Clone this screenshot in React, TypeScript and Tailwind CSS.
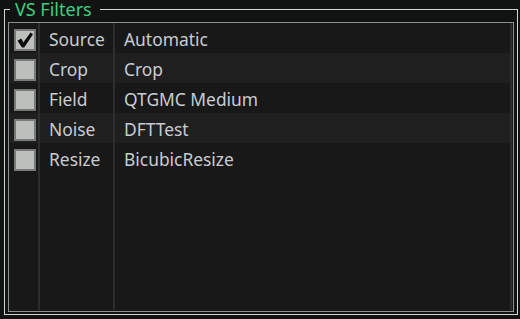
import React from 'react'

type Filter = {
  kind: string
  name: string
  enabled: boolean
}

const filters: Filter[] = [
  { kind: 'Source', name: 'Automatic', enabled: true },
  { kind: 'Crop', name: 'Crop', enabled: false },
  { kind: 'Field', name: 'QTGMC Medium', enabled: false },
  { kind: 'Noise', name: 'DFTTest', enabled: false },
  { kind: 'Resize', name: 'BicubicResize', enabled: false },
]

function CheckBox({ checked }: { checked: boolean }) {
  return (
    <div className="w-[22px] h-[22px] border-2 border-[#777b77] bg-[#bcbfbc] flex items-center justify-center">
      {checked && (
        <svg width="18" height="18" viewBox="0 0 18 18">
          <path
            d="M1.5 9.8 L5.2 7.6 L7.4 11.2 L14.6 1.6 L17 3.2 L8.2 16.4 L6 16.4 Z"
            fill="#0a0a0a"
          />
        </svg>
      )}
    </div>
  )
}

export default function App() {
  return (
    <div
      className="w-[520px] h-[319px] bg-[#111313] pl-[4px]"
      style={{ fontFamily: '"Noto Sans", "Open Sans", sans-serif' }}
    >
      <fieldset className="w-[514px] h-[315px] border border-[#d4d4d4] flex flex-col px-[3px] pb-[2px]">
        <legend className="ml-[2px] pl-[5px] pr-[8px] text-[18px] leading-[18px] text-[#3fcf7f]">
          VS Filters
        </legend>

        <div className="mt-[4px] flex-1 border border-[#8c9094] bg-[#181818] flex pl-[1px] pr-[1px] pb-[1px]">
          <div className="flex-1 flex flex-col">
            {filters.map((f, i) => (
              <div
                key={f.kind}
                className={`grid grid-cols-[30px_75px_1fr] h-[30px] text-[17.4px] leading-[30px] text-[#c8ccd0] ${
                  i % 2 === 1 ? 'bg-[#1f1f1f]' : ''
                }`}
              >
                <div className="border-r-2 border-[#2e2e2e] pl-[4px] pt-[2px] flex items-center">
                  <CheckBox checked={f.enabled} />
                </div>
                <div className="border-r-2 border-[#2e2e2e] pl-[9px] pt-[1px] whitespace-nowrap">{f.kind}</div>
                <div className="pl-[9px] pt-[1px] whitespace-nowrap">{f.name}</div>
              </div>
            ))}
            {/* empty space keeps the column lines running down */}
            <div className="flex-1 grid grid-cols-[30px_75px_1fr]">
              <div className="border-r-2 border-[#2e2e2e]" />
              <div className="border-r-2 border-[#2e2e2e]" />
              <div />
            </div>
          </div>
          <div className="w-[2px] bg-[#2e2e2e]" />
        </div>
      </fieldset>
    </div>
  )
}
